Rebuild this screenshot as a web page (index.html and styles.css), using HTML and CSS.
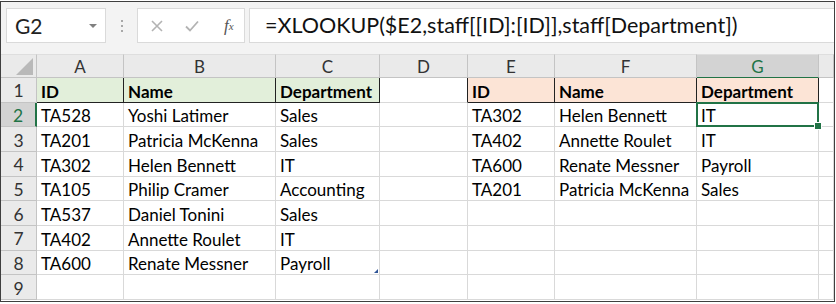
FILE: index.html
```html
<!DOCTYPE html>
<html lang="en">
<head>
    <meta charset="UTF-8">
    <title>XLOOKUP staff</title>
    <link rel="stylesheet" href="styles.css">
</head>
<body>
    <div class="excel">
        <div class="toolbar">
            <div class="namebox">
                <span>G2</span>
                <span class="arrow"></span>
            </div>
            <div class="grip"><i></i><i></i><i></i></div>
            <div class="buttons">
                <svg class="btn" width="14" height="14" viewBox="0 0 14 14"><path d="M2 2 L12 12 M12 2 L2 12" stroke="#b3b3b3" stroke-width="1.6" fill="none"/></svg>
                <svg class="btn" width="16" height="14" viewBox="0 0 16 14"><path d="M2 7.5 L6 11.5 L14 2.5" stroke="#b3b3b3" stroke-width="1.8" fill="none"/></svg>
                <span class="fx">f<sub>x</sub></span>
            </div>
            <div class="formula">=XLOOKUP($E2,staff[[ID]:[ID]],staff[Department])</div>
        </div>

        <div class="sheet">
            <div class="hd corner"><span class="tri"></span></div><div class="hd">A</div><div class="hd">B</div><div class="hd">C</div><div class="hd">D</div><div class="hd">E</div><div class="hd">F</div><div class="hd active">G</div><div class="hd"></div>

            <div class="rh">1</div><div class="c th green">ID</div><div class="c th green">Name</div><div class="c th green">Department</div><div class="c gap"></div><div class="c th orange">ID</div><div class="c th orange">Name</div><div class="c th orange">Department</div><div class="c"></div>

            <div class="rh active">2</div><div class="c">TA528</div><div class="c">Yoshi Latimer</div><div class="c">Sales</div><div class="c"></div><div class="c">TA302</div><div class="c">Helen Bennett</div><div class="c selected">IT<span class="handle"></span></div><div class="c"></div>

            <div class="rh">3</div><div class="c">TA201</div><div class="c">Patricia McKenna</div><div class="c">Sales</div><div class="c"></div><div class="c">TA402</div><div class="c">Annette Roulet</div><div class="c">IT</div><div class="c"></div>

            <div class="rh">4</div><div class="c">TA302</div><div class="c">Helen Bennett</div><div class="c">IT</div><div class="c"></div><div class="c">TA600</div><div class="c">Renate Messner</div><div class="c">Payroll</div><div class="c"></div>

            <div class="rh">5</div><div class="c">TA105</div><div class="c">Philip Cramer</div><div class="c">Accounting</div><div class="c"></div><div class="c">TA201</div><div class="c">Patricia McKenna</div><div class="c">Sales</div><div class="c"></div>

            <div class="rh">6</div><div class="c">TA537</div><div class="c">Daniel Tonini</div><div class="c">Sales</div><div class="c"></div><div class="c"></div><div class="c"></div><div class="c"></div><div class="c"></div>

            <div class="rh">7</div><div class="c">TA402</div><div class="c">Annette Roulet</div><div class="c">IT</div><div class="c"></div><div class="c"></div><div class="c"></div><div class="c"></div><div class="c"></div>

            <div class="rh">8</div><div class="c">TA600</div><div class="c">Renate Messner</div><div class="c table-end">Payroll<span class="resize"></span></div><div class="c"></div><div class="c"></div><div class="c"></div><div class="c"></div><div class="c"></div>

            <div class="rh">9</div><div class="c"></div><div class="c"></div><div class="c"></div><div class="c"></div><div class="c"></div><div class="c"></div><div class="c"></div><div class="c"></div>
        </div>
    </div>
</body>
</html>
```

FILE: styles.css
```css
:root {
    --grid-line: #d9d9d9;
    --header-bg: #eaeaea;
    --header-line: #c4c4c4;
    --excel-green: #217346;
    --table-green: #e2efda;
    --table-orange: #fce4d6;
}

body {
    margin: 0;
    background: #ffffff;
    font-family: Lato, 'Liberation Sans', sans-serif;
    color: #000000;
}

.excel {
    width: 835px;
    height: 301px;
    margin-top: 1px;
    border: 1px solid #3f3f3f;
    box-sizing: border-box;
    overflow: hidden;
    background: #ffffff;
}

/* formula bar */
.toolbar {
    display: flex;
    align-items: flex-start;
    height: 52px;
    padding: 6px 0 0 5px;
    box-sizing: border-box;
    background: #f3f3f3;
}

.namebox {
    display: flex;
    align-items: center;
    justify-content: space-between;
    width: 100px;
    height: 35px;
    padding: 0 8px;
    box-sizing: border-box;
    background: #ffffff;
    border: 1px solid #dadada;
    font-size: 21px;
    color: #222;
}

.arrow {
    width: 0;
    height: 0;
    border-left: 4px solid transparent;
    border-right: 4px solid transparent;
    border-top: 4px solid #808080;
}

.grip {
    display: flex;
    flex-direction: column;
    align-items: center;
    justify-content: center;
    gap: 3px;
    width: 31px;
    height: 35px;
}

.grip i {
    width: 2px;
    height: 2px;
    background: #a8a8a8;
}

.buttons {
    display: flex;
    align-items: center;
    width: 108px;
    height: 35px;
    padding-left: 12px;
    box-sizing: border-box;
    background: #ffffff;
    border: 1px solid #dadada;
}

.btn {
    margin-right: 20px;
}

.buttons .btn:nth-child(2) {
    margin-right: 24px;
}

.fx {
    font-family: 'Liberation Serif', serif;
    font-style: italic;
    font-size: 17px;
    color: #555;
}

.fx sub {
    font-size: 11px;
    vertical-align: 1px;
}

.formula {
    flex: 1;
    height: 35px;
    margin-left: 4px;
    padding-left: 15px;
    box-sizing: border-box;
    background: #ffffff;
    border: 1px solid #dadada;
    border-right: none;
    font-size: 21.5px;
    line-height: 33px;
    color: #111;
    white-space: nowrap;
}

/* grid */
.sheet {
    display: grid;
    grid-template-columns: 36px 87px 152px 104px 88px 87px 142px 122px 15px;
    grid-template-rows: 24px repeat(9, 24.67px);
}

.hd {
    display: flex;
    align-items: center;
    justify-content: center;
    background: var(--header-bg);
    border-right: 1px solid var(--header-line);
    border-bottom: 1px solid var(--header-line);
    border-top: 1px solid #dedede;
    font-size: 17px;
    color: #333;
}

.hd.active {
    background: #d3d3d3;
    color: var(--excel-green);
    border-bottom: 1px solid var(--excel-green);
}

.corner {
    position: relative;
}

.tri {
    position: absolute;
    right: 3px;
    bottom: 2px;
    width: 0;
    height: 0;
    border-left: 17px solid transparent;
    border-bottom: 17px solid #b9b9b9;
}

.rh {
    display: flex;
    align-items: center;
    justify-content: center;
    padding-top: 2px;
    box-sizing: border-box;
    background: var(--header-bg);
    border-right: 1px solid var(--header-line);
    border-bottom: 1px solid var(--header-line);
    font-size: 17.5px;
    color: #333;
}

.rh.active {
    background: #d3d3d3;
    color: var(--excel-green);
    border-right: 2px solid var(--excel-green);
}

.c {
    position: relative;
    display: flex;
    align-items: center;
    padding: 3px 0 0 4px;
    box-sizing: border-box;
    border-right: 1px solid var(--grid-line);
    border-bottom: 1px solid var(--grid-line);
    font-size: 17px;
    white-space: nowrap;
}

.c.th {
    font-weight: bold;
    border-right: 1px solid #222;
    border-bottom: 1px solid #222;
}

.c.green { background: var(--table-green); }
.c.orange { background: var(--table-orange); }

.c.gap {
    border-right: 1px solid #222;
}

.selected::after {
    content: '';
    position: absolute;
    left: -1px;
    top: -1px;
    right: -1px;
    bottom: -1px;
    border: 2px solid var(--excel-green);
}

.handle {
    position: absolute;
    right: -4px;
    bottom: -4px;
    width: 6px;
    height: 6px;
    background: var(--excel-green);
    border: 1px solid #fff;
    z-index: 2;
}

.resize {
    position: absolute;
    right: 1px;
    bottom: 1px;
    width: 0;
    height: 0;
    border-left: 4px solid transparent;
    border-bottom: 4px solid #2f5597;
}
```
